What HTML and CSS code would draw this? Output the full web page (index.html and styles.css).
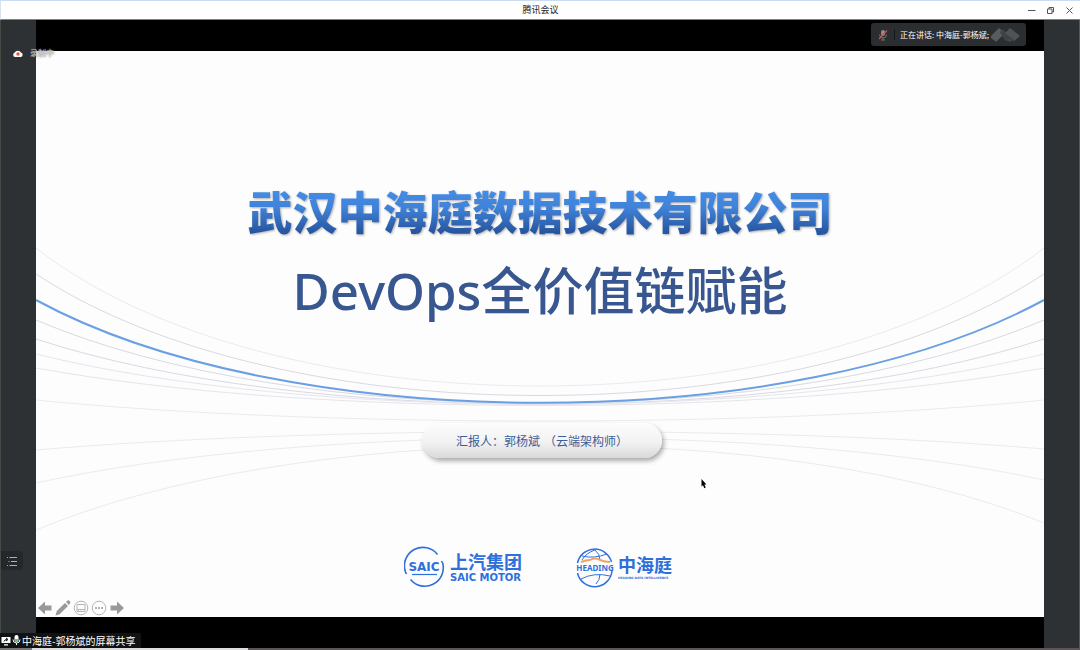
FILE: index.html
```html
<!DOCTYPE html>
<html lang="zh-CN">
<head>
<meta charset="utf-8">
<title>腾讯会议</title>
<link rel="stylesheet" href="styles.css">
</head>
<body>
<header class="titlebar">
  <span class="titlebar-name">腾讯会议</span>
  <div class="window-controls">
    <button class="window-button" aria-label="最小化"><svg width="9" height="9" viewBox="0 0 9 9"><path d="M1 4.5h7.500"/></svg></button>
    <button class="window-button" aria-label="还原"><svg width="9" height="9" viewBox="0 0 9 9"><path d="M1.500 3h4.500v4.500h-4.500zM3 3V1.500h4.500V6H6"/></svg></button>
    <button class="window-button" aria-label="关闭"><svg width="9" height="9" viewBox="0 0 9 9"><path d="M1.500 1.500l6 6M7.500 1.500l-6 6"/></svg></button>
  </div>
</header>

<main class="meeting">
  <aside class="rail rail-left">
    <button class="list-button" aria-label="列表"><svg width="12" height="12" viewBox="0 0 12 12"><path d="M3.500 2.500h7.500M5 6.500h6M3.500 10.500h7.500M1 2.500h1M2.500 6.500h1M1 10.500h1"/></svg></button>
  </aside>

  <section class="stage">
    <article class="slide">
      <svg class="curves" viewBox="0 0 1008 566" preserveAspectRatio="none" aria-hidden="true">
        <path class="line faint" d="M0 197C236 381 772 381 1008 197"/>
        <path class="line mid" d="M0 223C245 385 763 385 1008 223"/>
        <path class="line mid" d="M0 269C260 380 748 380 1008 269"/>
        <path class="line mid" d="M0 288C265 375 743 375 1008 288"/>
        <path class="line pale" d="M0 303C270 370 738 370 1008 303"/>
        <path class="line pale" d="M0 317C275 367 733 367 1008 317"/>
        <path class="line faint" d="M0 349C280 377 728 377 1008 349"/>
        <path class="line faint" d="M0 399C280 375 728 374 1008 398"/>
        <path class="line faint" d="M0 432C270 373 738 371 1008 429"/>
        <path class="line faint" d="M0 479C260 370 748 365 1008 472"/>
        <path class="line accent" d="M0 249C252 386 756 386 1008 249"/>
      </svg>

      <h1 class="company">武汉中海庭数据技术有限公司</h1>
      <h2 class="topic">DevOps全价值链赋能</h2>
      <p class="presenter"><span>汇报人：郭杨斌</span><span>（云端架构师）</span></p>

      <div class="logos">
        <div class="logo">
          <svg width="42" height="42" viewBox="0 0 42 42" aria-hidden="true">
            <g fill="none" stroke="#2e6fdc" stroke-width="1.600">
              <path d="M3 27.500q-1.500 0-1.700-2A18.500 18.500 0 0 1 33.500 8.500"/>
              <path d="M37 15.500q1.500 0 1.800 2A18.500 18.500 0 0 1 6.500 33.500"/>
              <path d="M8 28.500h25" stroke-width="1.200"/>
            </g>
            <text class="saic-mark" x="20" y="25" text-anchor="middle">SAIC</text>
          </svg>
          <div class="logo-text"><span class="logo-name">上汽集团</span><span class="logo-latin">SAIC MOTOR</span></div>
        </div>
        <div class="logo">
          <svg width="38" height="42" viewBox="0 0 38 42" aria-hidden="true">
            <g fill="none" stroke="#2e6fdc" stroke-width="1.500">
              <path d="M1.500 17A17.500 17.500 0 0 1 35.500 16"/>
              <path d="M1.500 27A17.500 17.500 0 0 0 36 25"/>
              <path d="M19 4q5 4 5 10M24 28q0 6-4 10M19 4q-9 3-13 10" stroke-width="1"/>
              <path d="M6 10q12 3 25-2M5 33q13-7 29-3" stroke-width="1"/>
            </g>
            <path d="M5 16q5-2 9-2q5-3 10 0q5 2 10 2" fill="none" stroke="#efa35f" stroke-width="2"/>
            <text class="heading-mark" x="19" y="25" text-anchor="middle">HEADING</text>
          </svg>
          <div class="logo-text"><span class="logo-name">中海庭</span><span class="logo-tagline">HEADING DATA INTELLIGENCE</span></div>
        </div>
      </div>

      <nav class="slide-tools">
        <button class="tool" aria-label="上一页"><svg width="16" height="16" viewBox="0 0 16 16"><path class="solid" d="M1 8l7-6.500v4h6.500v5H8v4z"/></svg></button>
        <button class="tool" aria-label="画笔"><svg width="16" height="16" viewBox="0 0 16 16"><path class="solid" d="M.5 15.500l1.300-4.500L10 3l3 3-8.300 8.200zM11 2l1.200-1.200q1.200-1 2.500.2t.2 2.600L13.900 4.900z"/></svg></button>
        <button class="tool" aria-label="全部幻灯片"><svg width="16" height="16" viewBox="0 0 16 16"><circle cx="8" cy="8" r="6.800"/><path d="M4 4.500h8v7H4zM4 9.500h8M5.500 10.500v1M8 10.500v1"/></svg></button>
        <button class="tool" aria-label="更多"><svg width="16" height="16" viewBox="0 0 16 16"><circle cx="8" cy="8" r="6.800"/><path class="solid light" d="M4 7h2v2H4zM7 7h2v2H7zM10 7h2v2h-2z"/></svg></button>
        <button class="tool" aria-label="下一页"><svg width="16" height="16" viewBox="0 0 16 16"><path class="solid" d="M15 8L8 1.500v4H1.500v5H8v4z"/></svg></button>
      </nav>
      <svg class="cursor" width="6" height="10" viewBox="0 0 6 10" aria-hidden="true"><path d="M.5 0v7.500l1.500-1.300L3.300 9.300l1.400-.7L3.400 5.600h2z"/></svg>
    </article>
  </section>

  <aside class="rail rail-right"></aside>

  <div class="recording">
    <svg width="12" height="9" viewBox="0 0 12 9" aria-hidden="true"><path d="M3 8a2.300 2.300 0 0 1-.3-4.400A3.500 3.500 0 0 1 9 3.600 2.300 2.300 0 0 1 9 8z" fill="#fff"/><circle cx="6" cy="5" r="1.700" fill="#f0503c"/></svg>
    <span>录制中</span>
  </div>

  <div class="speaking">
    <svg class="muted" width="10" height="12" viewBox="0 0 10 12" aria-hidden="true"><rect x="3" y="1" width="4" height="6" rx="2" fill="#8b8e90"/><path d="M1.500 5.500q0 3.500 3.500 3.500t3.500-3.500M5 9v2M3 11h4" fill="none" stroke="#6f7274"/><path d="M1 10l8-8.500" stroke="#d9503f" stroke-width="1.200"/></svg>
    <span class="speaking-name">正在讲话: 中海庭-郭杨斌;</span>
    <svg width="30" height="16" viewBox="0 0 30 16" aria-hidden="true"><path d="M1 9l8-8 6 5-8 8q-1 1-2 0l-4-3z" fill="#595c5e"/><path d="M10 5l3-3 6 7-4 5z" fill="#3f4244"/><path d="M15 6l5-5 9 7q1 1 0 2l-5 4z" fill="#505355"/><path d="M20 9l4 4-4 2-5-2z" fill="#424547"/></svg>
  </div>

  <div class="share-status">
    <svg width="10" height="10" viewBox="0 0 10 10" aria-hidden="true"><path d="M.5 1h9v6h-9zM3 8.200h4V9.500H3z" fill="#fff"/><path d="M3 5.500q.5-2 3-2M5 2l2 1.500L5 5" fill="none" stroke="#111"/></svg>
    <svg width="9" height="11" viewBox="0 0 9 11" aria-hidden="true"><rect x="2.500" y="0" width="4" height="7" rx="2" fill="#fff"/><path d="M2.500 4h4v1q0 2-2 2t-2-2z" fill="#5fc48b"/><path d="M1 4.500q0 3.500 3.500 3.500T8 4.500M4.500 8v2" fill="none" stroke="#fff"/></svg>
    <span>中海庭-郭杨斌的屏幕共享</span>
  </div>
</main>
<div class="taskbar-edge"></div>
</body>
</html>
```
FILE: styles.css
```css
* { box-sizing: border-box; }

body {
  margin: 0;
  height: 100vh;
  display: flex;
  flex-direction: column;
  overflow: hidden;
  background: #000;
  font-family: "Noto Sans CJK SC", sans-serif;
}

button {
  padding: 0;
  border: 0;
  background: none;
  display: flex;
  align-items: center;
  justify-content: center;
}

h1, h2, p { margin: 0; }

.titlebar {
  flex: none;
  height: 20px;
  display: grid;
  grid-template-columns: 1fr auto 1fr;
  align-items: center;
  background: #fff;
  border-top: 1px solid #c9dcf2;
  border-left: 1px solid #d5e2f0;
  border-bottom: 1px solid #7c8583;
}

.titlebar-name {
  grid-column: 2;
  font-size: 9px;
  line-height: 18px;
  color: #222;
}

.window-controls {
  justify-self: end;
  display: flex;
  gap: 10px;
  padding-right: 6px;
}

.window-button svg { fill: none; stroke: #555; }

.meeting {
  position: relative;
  flex: 1;
  min-height: 0;
  display: flex;
}

.rail {
  flex: none;
  width: 36px;
  background: #2d3134;
}

.rail-left {
  display: flex;
  flex-direction: column;
  justify-content: flex-end;
  padding-bottom: 78px;
  border-left: 1px solid #454a44;
}

.rail-right { border-right: 1px solid #55595b; }

.list-button {
  width: 22px;
  height: 19px;
  background: #25282b;
  border-radius: 0 3px 3px 0;
}

.list-button svg { fill: none; stroke: #aeb0b1; }

.stage {
  flex: 1;
  min-width: 0;
  display: flex;
  padding: 31px 0;
  background: #000;
}

.slide {
  position: relative;
  flex: 1;
  display: flex;
  flex-direction: column;
  align-items: center;
  padding-top: 130px;
  background: #fdfdfd;
}

.curves {
  position: absolute;
  inset: 0;
  width: 100%;
  height: 100%;
}

.line { fill: none; stroke-width: 1; }
.faint { stroke: #ebebee; }
.pale { stroke: #e4e6ec; }
.mid { stroke: #d8d9e4; }
.accent { stroke: #6b9fe3; stroke-width: 2; }

.company {
  position: relative;
  font-size: 45px;
  font-weight: 900;
  line-height: 60px;
  white-space: nowrap;
  color: transparent;
  background: linear-gradient(#448be4 20%, #3f82d9 45%, #2856a0 85%);
  background-clip: text;
  -webkit-background-clip: text;
  filter: drop-shadow(1px 1px 1px #00000050);
}

.topic {
  position: relative;
  margin-top: 9px;
  font-family: "Noto Sans", "Noto Sans CJK SC", sans-serif;
  font-size: 51px;
  font-weight: 500;
  line-height: 80px;
  white-space: nowrap;
  color: #38568f;
}

.presenter {
  position: relative;
  display: flex;
  justify-content: center;
  gap: 4px;
  width: 240px;
  margin: 93px 0 0 4px;
  border-radius: 18px;
  background: linear-gradient(#fdfdfd, #f2f2f2 55%, #d9d9d9);
  box-shadow: 2px 3px 5px #00000055;
  font-size: 12px;
  line-height: 35px;
  white-space: nowrap;
  color: #3d5c98;
}

.logos {
  position: relative;
  display: flex;
  gap: 54px;
  margin: 88px 4px 0 0;
}

.logo {
  display: flex;
  align-items: center;
  gap: 4px;
  color: #2e6fdc;
}

.logo-text {
  display: flex;
  flex-direction: column;
  white-space: nowrap;
}

.logo-name {
  font-size: 18px;
  font-weight: 700;
  line-height: 19px;
}

.logo-latin {
  margin-top: 2px;
  font: 700 10px/10px "DejaVu Sans", sans-serif;
}

.logo-tagline {
  margin-top: 2px;
  font: 700 3px/4px "DejaVu Sans", sans-serif;
}

.saic-mark {
  font: 700 12px "DejaVu Sans", sans-serif;
  fill: #2e6fdc;
}

.heading-mark {
  font: 700 8px "Noto Sans", sans-serif;
  fill: #2e6fdc;
}

.slide-tools {
  position: relative;
  align-self: flex-start;
  display: flex;
  gap: 2px;
  margin-top: auto;
  padding: 0 0 1px 1px;
}

.tool svg { fill: none; stroke: #b4b4b4; }
.tool .solid { fill: #999; stroke: none; }
.tool .light { fill: #b4b4b4; }

.cursor {
  position: absolute;
  left: 66%;
  top: 428px;
}

.recording {
  position: absolute;
  left: 12px;
  top: 26px;
  display: flex;
  align-items: center;
  gap: 6px;
  font-size: 8px;
  line-height: 14px;
  color: #d0d0d0;
  text-shadow: 0 0 2px #555;
}

.speaking {
  position: absolute;
  right: 54px;
  top: 3px;
  display: flex;
  align-items: center;
  height: 23px;
  width: 155px;
  padding-left: 7px;
  background: #2b2e31;
  border-radius: 3px;
  font-size: 8px;
  color: #fff;
  white-space: nowrap;
}

.speaking-name {
  margin: 0 1px 0 6px;
  padding-left: 5px;
  border-left: 1px solid #17191b;
}

.share-status {
  position: absolute;
  left: 0;
  bottom: 0;
  display: flex;
  align-items: center;
  gap: 1px;
  height: 15px;
  padding: 0 6px 0 1px;
  background: #101214;
  font-size: 10px;
  line-height: 15px;
  color: #fff;
}

.taskbar-edge {
  flex: none;
  height: 2px;
  background: linear-gradient(90deg, #777 0 3%, #ddd 3% 23%, #5c5558 23%);
}
```
